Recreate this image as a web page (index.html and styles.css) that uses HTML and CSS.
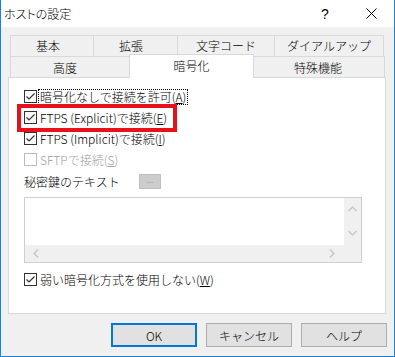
FILE: index.html
```html
<!DOCTYPE html>
<html lang="ja">
<head>
<meta charset="utf-8">
<title>ホストの設定</title>
<link rel="stylesheet" href="styles.css">
</head>
<body>
<div class="window">
  <div class="titlebar">
    <span class="title">ホストの設定</span>
    <span class="tb-btn help">?</span>
    <span class="tb-btn close"><svg width="11" height="11" viewBox="0 0 11 11"><path d="M0.5 0.5 L10.5 10.5 M10.5 0.5 L0.5 10.5" stroke="#000" stroke-width="1" fill="none"/></svg></span>
  </div>
  <div class="client">
    <div class="tabrow">
      <div class="tab t1">基本</div>
      <div class="tab t2">拡張</div>
      <div class="tab t3">文字コード</div>
      <div class="tab t4 last">ダイアルアップ</div>
    </div>
    <div class="tabrow row2">
      <div class="tab t5">高度</div>
      <div class="tab sel">暗号化</div>
      <div class="tab t7 last">特殊機能</div>
    </div>
    <div class="panel">
      <div class="cb">
        <svg class="box" width="13" height="13" viewBox="0 0 13 13"><rect x="0.5" y="0.5" width="12" height="12" fill="#fff" stroke="#333"/><path d="M2.5 6.5 L5 9 L10.5 3.5" stroke="#333" stroke-width="1.2" fill="none"/></svg>
        <span class="label focus">暗号化なしで接続を許可(<span class="u">A</span>)</span>
      </div>
      <div class="cb marked">
        <svg class="box" width="13" height="13" viewBox="0 0 13 13"><rect x="0.5" y="0.5" width="12" height="12" fill="#fff" stroke="#333"/><path d="M2.5 6.5 L5 9 L10.5 3.5" stroke="#333" stroke-width="1.2" fill="none"/></svg>
        <span class="label">FTPS (Explicit)で接続(<span class="u">E</span>)</span>
        <span class="redbox"></span>
      </div>
      <div class="cb">
        <svg class="box" width="13" height="13" viewBox="0 0 13 13"><rect x="0.5" y="0.5" width="12" height="12" fill="#fff" stroke="#333"/><path d="M2.5 6.5 L5 9 L10.5 3.5" stroke="#333" stroke-width="1.2" fill="none"/></svg>
        <span class="label">FTPS (Implicit)で接続(<span class="u">I</span>)</span>
      </div>
      <div class="cb disabled">
        <svg class="box" width="13" height="13" viewBox="0 0 13 13"><rect x="0.5" y="0.5" width="12" height="12" fill="#fff" stroke="#bcbcbc"/></svg>
        <span class="label">SFTPで接続(<span class="u">S</span>)</span>
      </div>
      <div class="keyrow">
        <span class="keylabel">秘密鍵のテキスト</span>
        <span class="dots">...</span>
      </div>
      <div class="textbox">
        <div class="tb-area"></div>
        <div class="vscroll">
          <svg width="9" height="6" viewBox="0 0 9 6"><path d="M0.5 5 L4.5 1 L8.5 5" stroke="#c2c2c2" stroke-width="1.2" fill="none"/></svg>
          <svg width="9" height="6" viewBox="0 0 9 6"><path d="M0.5 1 L4.5 5 L8.5 1" stroke="#c2c2c2" stroke-width="1.2" fill="none"/></svg>
        </div>
        <div class="hscroll">
          <svg width="6" height="9" viewBox="0 0 6 9"><path d="M5 0.5 L1 4.5 L5 8.5" stroke="#c2c2c2" stroke-width="1.2" fill="none"/></svg>
          <svg width="6" height="9" viewBox="0 0 6 9"><path d="M1 0.5 L5 4.5 L1 8.5" stroke="#c2c2c2" stroke-width="1.2" fill="none"/></svg>
        </div>
        <div class="corner"></div>
      </div>
      <div class="cb weak">
        <svg class="box" width="13" height="13" viewBox="0 0 13 13"><rect x="0.5" y="0.5" width="12" height="12" fill="#fff" stroke="#333"/><path d="M2.5 6.5 L5 9 L10.5 3.5" stroke="#333" stroke-width="1.2" fill="none"/></svg>
        <span class="label">弱い暗号化方式を使用しない(<span class="u">W</span>)</span>
      </div>
    </div>
    <div class="buttons">
      <div class="btn default">OK</div>
      <div class="btn">キャンセル</div>
      <div class="btn">ヘルプ</div>
    </div>
  </div>
</div>
</body>
</html>
```

FILE: styles.css
```css
body {
  margin: 0;
  font-family: "Noto Sans CJK JP", "Noto Sans", sans-serif;
  font-size: 12px;
  font-weight: 300;
  color: #000;
  background: #f0f0f0;
}

.window {
  width: 395px;
  height: 357px;
  box-sizing: border-box;
  border: 1px solid #1883d7;
  border-top: none;
  background: #f0f0f0;
  display: flex;
  flex-direction: column;
  overflow: hidden;
}

.titlebar {
  height: 27px;
  background: #fff;
  display: flex;
  align-items: center;
  flex: none;
}

.title {
  flex: 1;
  padding-left: 3px;
  font-feature-settings: "palt";
}

.tb-btn {
  width: 46px;
  height: 27px;
  display: flex;
  align-items: center;
  justify-content: center;
}

.help {
  font-family: "Liberation Sans", sans-serif;
  font-size: 14px;
}

.client {
  padding: 8px 8px 0 7px;
}

.tabrow {
  display: flex;
  margin-left: 2px;
  height: 21px;
}

.tab {
  box-sizing: border-box;
  height: 21px;
  border: 1px solid #d9d9d9;
  border-right: none;
  border-bottom: none;
  background: #f0f0f0;
  display: flex;
  align-items: center;
  justify-content: center;
  flex: none;
  line-height: 1;
}

.tab.last {
  border-right: 1px solid #d9d9d9;
}

.t1 { width: 83px; padding-right: 8px; }
.t2 { width: 84px; padding-right: 9px; }
.t3 { width: 97px; }
.t4 { width: 110px; }
.t5 { width: 121px; padding-right: 12px; padding-top: 2px; }
.t7 { width: 133px; padding-top: 2px; }

.tab.sel {
  position: relative;
  z-index: 1;
  width: 125px;
  height: 24px;
  margin: -2px -2px 0 -2px;
  align-self: flex-start;
  background: #fff;
  border-right: 1px solid #d9d9d9;
  padding-bottom: 1px;
}

.t5 + .sel + .t7 {
  border-left: none;
}

.panel {
  box-sizing: border-box;
  width: 378px;
  height: 237px;
  background: #fff;
  border: 1px solid #d9d9d9;
  padding: 8px 0 0 15px;
  display: flex;
  flex-direction: column;
}

.cb {
  position: relative;
  display: flex;
  align-items: center;
  height: 21px;
  flex: none;
}

.box {
  flex: none;
  margin-right: 1px;
}

.label {
  padding: 0 1px;
  white-space: nowrap;
  line-height: 14px;
  border: 1px solid transparent;
}

.label.focus {
  border: 1px dotted #000;
}

.u {
  text-decoration: underline;
}

.disabled .label {
  color: #a0a0a0;
}

.redbox {
  position: absolute;
  left: -7px;
  top: -3px;
  width: 160px;
  height: 28px;
  box-sizing: border-box;
  border: 4px solid #e8101a;
}

.keyrow {
  display: flex;
  align-items: center;
  height: 22px;
  flex: none;
}

.keylabel {
  width: 115px;
}

.dots {
  box-sizing: border-box;
  width: 22px;
  height: 15px;
  background: #cccccc;
  border: 1px solid #bfbfbf;
  color: #8a8a8a;
  font-size: 9px;
  line-height: 10px;
  text-align: center;
}

.textbox {
  box-sizing: border-box;
  margin-top: 5px;
  width: 338px;
  height: 66px;
  border: 1px solid #cfcfcf;
  display: grid;
  grid-template-columns: 1fr 17px;
  grid-template-rows: 1fr 17px;
  flex: none;
}

.tb-area {
  background: #fff;
}

.vscroll {
  background: #f0f0f0;
  display: flex;
  flex-direction: column;
  align-items: center;
  justify-content: space-between;
  padding: 8px 0 9px;
}

.hscroll {
  background: #f0f0f0;
  display: flex;
  align-items: center;
  justify-content: space-between;
  padding: 0 9px 0 8px;
}

.corner {
  background: #f0f0f0;
}

.cb.weak {
  margin-top: 6px;
}

.buttons {
  display: flex;
  justify-content: flex-end;
  gap: 9px;
  margin-top: 9px;
  margin-right: -1px;
}

.btn {
  box-sizing: border-box;
  width: 86px;
  height: 24px;
  background: #e1e1e1;
  border: 1px solid #adadad;
  display: flex;
  align-items: center;
  justify-content: center;
}

.btn.default {
  border: 2px solid #0078d7;
}
```
